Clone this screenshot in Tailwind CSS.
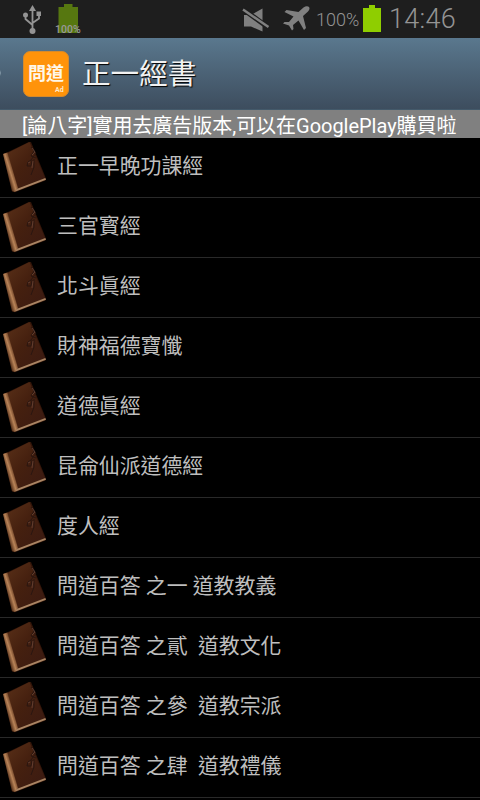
<!DOCTYPE html>
<html lang="zh-Hant">
<head>
<meta charset="utf-8">
<title>正一經書</title>
<script src="https://cdn.jsdelivr.net/npm/@tailwindcss/browser@4"></script>
</head>
<body class="w-[480px] h-[800px] overflow-hidden bg-black font-[Roboto,'Noto_Sans_CJK_TC',sans-serif]">
<svg class="absolute w-0 h-0">
  <defs>
    <linearGradient id="cover" x1="0" y1="0" x2="1" y2="1"><stop offset="0" stop-color="#5a3018"/><stop offset=".45" stop-color="#45200f"/><stop offset="1" stop-color="#3a1a12"/></linearGradient>
    <linearGradient id="spine" gradientUnits="userSpaceOnUse" x1="6" y1="30" x2="14" y2="27.500"><stop offset="0" stop-color="#4a2814"/><stop offset=".5" stop-color="#b98458"/><stop offset="1" stop-color="#5b3119"/></linearGradient>
    <symbol id="book" viewBox="0 0 48 56">
      <path d="M3 12 8 10 29.500 -.3 31 0 46 36.500 45.500 38.500 15 50.300 12 49.500Z" fill="#321509"/>
      <path d="M7.500 11 29.500 0 45 36 17 46.500Z" fill="url(#cover)"/>
      <path d="M3 12 7.500 10.500 18 46 15 50 12 49Z" fill="url(#spine)"/>
      <path d="M16.500 47 45.300 36 46 37.700 15.500 49.500Z" fill="#a98463"/>
      <path d="M31 5 34 9 31 14 36 16M33 8 36 11 31 18 28 20 27 24 31 24M34 17 34 25 31 33M32 18 31 24" fill="none" stroke="#2a1610" stroke-width="1"/>
      <path d="M32 6 35 10 32 13M33 19 32 26M28 21 30 20" fill="none" stroke="#704a3c" stroke-width=".7"/>
    </symbol>
  </defs>
</svg>
<div class="h-[38px] bg-[#1e1e1e] flex items-start">
  <svg class="ml-[22px] mt-[5px] w-[22px] h-[30px] shrink-0" viewBox="0 0 22 30" fill="none" stroke="#949494" stroke-width="1.800">
    <path d="M10.500 4V26M3.500 10V14L10.500 20M17 9V13.500L10.500 18"/>
    <path d="M10.500 0 14 6H7Z" fill="#949494" stroke="none"/><circle cx="3.500" cy="10" r="2.500" fill="#949494" stroke="none"/><path d="M14.500 6.500H19V11H14.500Z" fill="#949494" stroke="none"/><circle cx="10.500" cy="26" r="3" fill="#949494" stroke="none"/>
  </svg>
  <div class="relative ml-[10px] mt-1 w-[28px] h-[30px] shrink-0">
    <svg class="w-[28px] h-[30px]" viewBox="0 0 28 30"><path d="M4.500 3H10V0H18.500V3H24V29H4.500Z" fill="#567710"/></svg>
    <span class="absolute left-[1px] top-[20px] text-[10.500px] leading-[11px] font-medium text-[#999]">100%</span>
  </div>
  <svg class="ml-[160px] mt-[7px] w-[28px] h-[26px] shrink-0" viewBox="0 0 28 26" fill="#808080">
    <path d="M2 8H9L20.500 1.500V24.500L9 19.500H2Z"/><path d="M0 1.500 27 21" stroke="#1e1e1e" stroke-width="5"/><path d="M1 2.500 26.500 20" stroke="#808080" stroke-width="2.400"/>
  </svg>
  <svg class="ml-[12px] mt-[6px] w-[28px] h-[26px] shrink-0" viewBox="0 0 28 26" fill="#808080">
    <path d="M27 1C28 2 27.500 4 26 5.500L21 10 24 22 22 24 16.500 14.500 11 19 11.500 23 10 24.500 7 19.500 1 17.500 2.500 16 7 16 11.500 10.500 2.500 6 4.500 4 16.500 6 21.500 1.500C23.500 0 26 0 27 1Z"/>
  </svg>
  <span class="ml-[6px] mt-[9px] w-[47px] text-[18px] leading-[22px] text-[#949494] font-light">100%</span>
  <svg class="mt-[5px] w-[18px] h-[27px] shrink-0" viewBox="0 0 18 27"><path d="M0 3H6V0H12V3H18V27H0Z" fill="#8fce00"/></svg>
  <span class="ml-[8px] mt-[2px] text-[27px] leading-[34px] tracking-[0.300px] text-[#949494] font-light">14:46</span>
</div>
<div class="h-[72px] bg-linear-to-b from-[#5a788e] to-[#3d4d5e] border-b border-[#43596a] flex items-start">
  <svg class="w-[2px] h-[6px] mt-[32px] shrink-0" viewBox="0 0 2 6"><path d="M0 0 1 3 0 6Z" fill="#8197a6"/></svg>
  <div class="relative ml-[21px] mt-[13px] w-[46px] h-[46px] rounded-[7px] bg-[#ff930a] border border-[#d58a2c] shrink-0">
    <div class="absolute left-[4px] top-[9px] text-[18px] leading-[26px] font-bold text-[#fff7e8] whitespace-nowrap">問道</div>
    <div class="absolute left-[31px] top-[33px] text-[7px] leading-[10px] font-bold text-[#ffe8c5]">Ad</div>
  </div>
  <h1 class="ml-[13px] mt-[15px] text-[28.600px] leading-[42px] text-[#f2f2f2] [text-shadow:1px_1px_1px_#000]">正一經書</h1>
</div>
<div class="h-[28px] bg-[#808080] text-white text-[20px] leading-[32px] pl-[22px] tracking-[-0.030px] whitespace-nowrap">[論八字]實用去廣告版本,可以在GooglePlay購買啦</div>
<ul class="h-[662px] overflow-hidden text-[20.900px] leading-[56px] text-[#bebebe]">
  <li class="h-[60px] border-b border-[#292929] flex"><svg class="w-[48px] h-[56px] mt-1 mr-[9px] shrink-0 overflow-visible"><use href="#book" width="48" height="56"/></svg><span class="whitespace-pre">正一早晚功課經</span></li>
  <li class="h-[60px] border-b border-[#292929] flex"><svg class="w-[48px] h-[56px] mt-1 mr-[9px] shrink-0 overflow-visible"><use href="#book" width="48" height="56"/></svg><span class="whitespace-pre">三官寳經</span></li>
  <li class="h-[60px] border-b border-[#292929] flex"><svg class="w-[48px] h-[56px] mt-1 mr-[9px] shrink-0 overflow-visible"><use href="#book" width="48" height="56"/></svg><span class="whitespace-pre">北斗眞經</span></li>
  <li class="h-[60px] border-b border-[#292929] flex"><svg class="w-[48px] h-[56px] mt-1 mr-[9px] shrink-0 overflow-visible"><use href="#book" width="48" height="56"/></svg><span class="whitespace-pre">財神福德寶懺</span></li>
  <li class="h-[60px] border-b border-[#292929] flex"><svg class="w-[48px] h-[56px] mt-1 mr-[9px] shrink-0 overflow-visible"><use href="#book" width="48" height="56"/></svg><span class="whitespace-pre">道德眞經</span></li>
  <li class="h-[60px] border-b border-[#292929] flex"><svg class="w-[48px] h-[56px] mt-1 mr-[9px] shrink-0 overflow-visible"><use href="#book" width="48" height="56"/></svg><span class="whitespace-pre">昆侖仙派道德經</span></li>
  <li class="h-[60px] border-b border-[#292929] flex"><svg class="w-[48px] h-[56px] mt-1 mr-[9px] shrink-0 overflow-visible"><use href="#book" width="48" height="56"/></svg><span class="whitespace-pre">度人經</span></li>
  <li class="h-[60px] border-b border-[#292929] flex"><svg class="w-[48px] h-[56px] mt-1 mr-[9px] shrink-0 overflow-visible"><use href="#book" width="48" height="56"/></svg><span class="whitespace-pre">問道百答 之一 道教教義</span></li>
  <li class="h-[60px] border-b border-[#292929] flex"><svg class="w-[48px] h-[56px] mt-1 mr-[9px] shrink-0 overflow-visible"><use href="#book" width="48" height="56"/></svg><span class="whitespace-pre">問道百答 之貳  道教文化</span></li>
  <li class="h-[60px] border-b border-[#292929] flex"><svg class="w-[48px] h-[56px] mt-1 mr-[9px] shrink-0 overflow-visible"><use href="#book" width="48" height="56"/></svg><span class="whitespace-pre">問道百答 之參  道教宗派</span></li>
  <li class="h-[60px] border-b border-[#292929] flex"><svg class="w-[48px] h-[56px] mt-1 mr-[9px] shrink-0 overflow-visible"><use href="#book" width="48" height="56"/></svg><span class="whitespace-pre">問道百答 之肆  道教禮儀</span></li>
</ul>
</body>
</html>
